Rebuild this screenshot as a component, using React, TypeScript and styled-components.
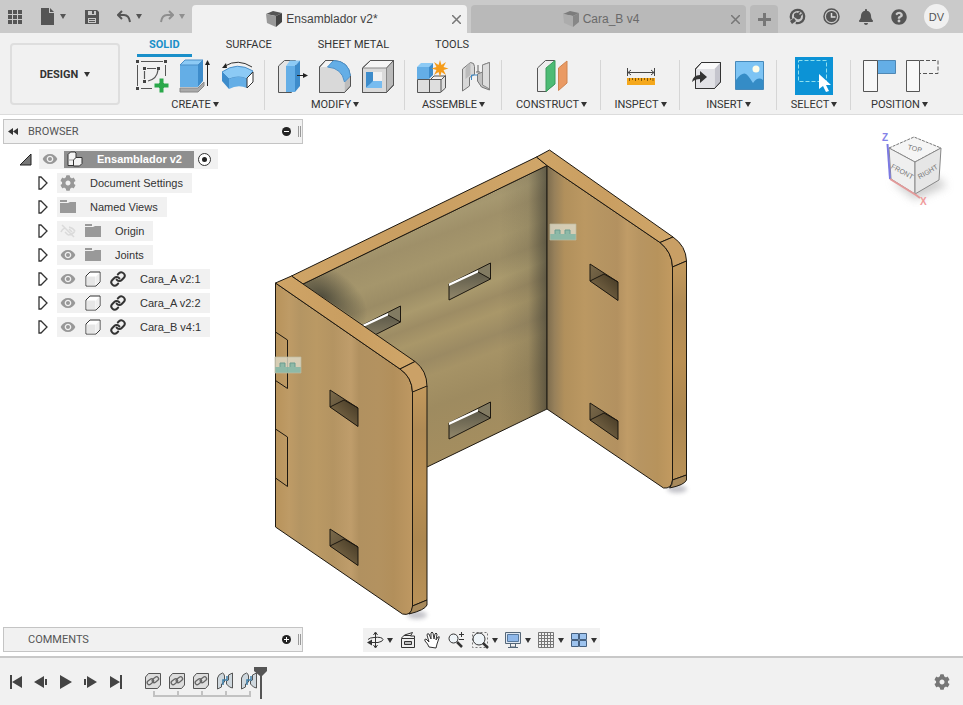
import React from 'react';
import styled, { createGlobalStyle, css } from 'styled-components';
import { Link as ChainIcon } from 'lucide-react';
import { MdVisibility } from 'react-icons/md';
import { FaBell, FaCog, FaQuestionCircle } from 'react-icons/fa';

const GlobalStyle = createGlobalStyle`
  *, *::before, *::after { box-sizing: border-box; }
  body { margin: 0; background: #fff; color: #333; font-family: "Liberation Sans", Arial, sans-serif; font-size: 11px; }
  button { font: inherit; color: inherit; background: none; border: 0; padding: 0; margin: 0; }
  svg { display: block; flex: none; }
  ul { list-style: none; margin: 0; padding: 0; }
`;

const Page = styled.div`
  min-height: 100vh;
  display: flex;
  flex-direction: column;
`;

/* ---------- title bar ---------- */

const TitleBar = styled.header`
  display: flex;
  align-items: flex-end;
  height: 33px;
  background: #cacaca;
  color: #5a5a5a;
`;

const QuickTools = styled.div`
  flex: none;
  width: 192px;
  height: 33px;
  padding: 0 7px 0 7px;
  display: flex;
  align-items: center;
  justify-content: space-between;
`;

const BarButton = styled.button<{ $faded?: boolean }>`
  display: flex;
  align-items: center;
  gap: 5px;
  color: ${p => (p.$faded ? '#8f8f8f' : '#555')};
`;

const FileTab = styled.div<{ $active?: boolean }>`
  flex: 0 1 275px;
  height: 28px;
  margin-right: 4px;
  padding: 0 6px 0 0;
  display: flex;
  align-items: center;
  border-radius: 4px 4px 0 0;
  background: ${p => (p.$active ? '#f1f1f1' : '#b9b9b9')};
  color: ${p => (p.$active ? '#444' : '#6a6a6a')};
  font-size: 12px;
`;

const FileName = styled.button`
  flex: 1;
  display: flex;
  align-items: center;
  justify-content: center;
  gap: 4px;
  white-space: nowrap;
`;

const IconButton = styled.button`
  display: flex;
  align-items: center;
  justify-content: center;
`;

const AddTab = styled(IconButton)`
  flex: none;
  width: 28px;
  height: 28px;
  border-radius: 4px 4px 0 0;
  background: #bababa;
`;

const AccountTools = styled.div`
  flex: 1;
  height: 33px;
  padding: 0 14px 0 11px;
  display: flex;
  align-items: center;
  justify-content: space-between;
  color: #555;
`;

const Avatar = styled.button`
  width: 25px;
  height: 25px;
  border-radius: 50%;
  background: #f0f0f0;
  font-size: 11px;
`;

/* ---------- ribbon ---------- */

const Ribbon = styled.section`
  display: flex;
  height: 82px;
  background: #f1f1f1;
  border-bottom: 1px solid #dcdcdc;
  font-family: Roboto, "Liberation Sans", sans-serif;
  font-size: 11px;
  color: #333;
`;

const Workspace = styled.button`
  flex: none;
  width: 110px;
  height: 62px;
  margin: 10px 5px 0 10px;
  display: flex;
  align-items: center;
  justify-content: center;
  gap: 6px;
  border: 2px solid #dedede;
  border-radius: 4px;
  font-weight: 700;
`;

const RibbonBody = styled.div`
  flex: 1;
  min-width: 0;
`;

const RibbonTabs = styled.div`
  display: flex;
  gap: 22px;
  padding-left: 12px;
  height: 24px;
`;

const RibbonTab = styled.button<{ $active?: boolean }>`
  height: 24px;
  padding: 1px 12px 0;
  border-bottom: 3px solid transparent;
  ${p => p.$active && css`
    border-bottom-color: #1a8fc9;
    color: #1a8fc9;
    font-weight: 700;
  `}
`;

const Groups = styled.div`
  display: flex;
`;

const GroupBox = styled.div<{ $width?: number }>`
  flex: none;
  min-width: ${p => p.$width ?? 97}px;
  height: 57px;
  padding: 0 8px;
  display: flex;
  flex-direction: column;
  align-items: center;
  background: linear-gradient(#d6d6d6, #d6d6d6) right 3px / 1px 50px no-repeat;
  &:last-child { background: none; }
`;

const GroupIcons = styled.div`
  display: flex;
  gap: 5px;
`;

const GroupLabel = styled.button`
  height: 20px;
  display: flex;
  align-items: center;
  gap: 2px;
  white-space: nowrap;
`;

/* ---------- canvas ---------- */

const Canvas = styled.main`
  flex: 1;
  display: grid;
  grid-template: 1fr / 1fr;
  background: #fff;
  > * { grid-area: 1 / 1; }
`;

const ModelArea = styled.div`
  place-self: center;
`;

const CubeArea = styled.div`
  place-self: start end;
  padding-top: 5px;
`;

const SidePanels = styled.aside`
  width: 303px;
  padding: 4px 0 4px 3px;
  display: flex;
  flex-direction: column;
  justify-content: space-between;
`;

const PanelHead = styled.div`
  height: 25px;
  display: flex;
  align-items: center;
  padding: 0 1px 0 4px;
  border: 1px solid #c4c4c4;
  background: #f1f1f1;
  font-size: 11px;
  font-family: Roboto, "Liberation Sans", sans-serif;
  color: #555;
`;

const PanelTitle = styled.h2`
  flex: 1;
  margin: 0;
  font: inherit;
`;

const PanelCollapse = styled(IconButton)`
  width: 20px;
  justify-content: flex-start;
`;

const Grip = styled.span`
  width: 3px;
  height: 11px;
  margin-left: 7px;
  border: solid #999;
  border-width: 0 1px;
`;

const Tree = styled.ul`
  padding-top: 3px;
`;

const TreeRow = styled.li<{ $root?: boolean }>`
  height: 24px;
  padding-left: ${p => (p.$root ? 16 : 35)}px;
  display: flex;
  align-items: center;
  gap: ${p => (p.$root ? 7 : 9)}px;
`;

const Chip = styled.div<{ $root?: boolean }>`
  height: 20px;
  padding: 0 ${p => (p.$root ? 6 : 9)}px 0 3px;
  display: flex;
  align-items: center;
  gap: ${p => (p.$root ? 3 : 9)}px;
  background: #f1f1f1;
  color: #989898;
`;

const NodeName = styled.button`
  margin-left: 5px;
  color: #333;
  white-space: nowrap;
`;

const RootName = styled.button`
  height: 17px;
  margin-left: 3px;
  padding: 0 12px 0 3px;
  display: flex;
  align-items: center;
  gap: 14px;
  background: #8f8f8f;
  color: #fff;
  font-weight: 700;
  white-space: nowrap;
`;

const NavBar = styled.div`
  place-self: end center;
  height: 24px;
  margin-bottom: 4px;
  padding: 0 3px;
  display: flex;
  align-items: center;
  gap: 6px;
  background: #f1f1f1;
`;

const NavButton = styled.button`
  display: flex;
  align-items: center;
  gap: 3px;
  color: #333;
`;

/* ---------- timeline ---------- */

const Timeline = styled.footer`
  height: 49px;
  padding: 0 13px 0 7px;
  display: flex;
  align-items: center;
  border-top: 2px solid #c8c8c8;
  background: #f1f1f1;
  color: #444;
`;

const Playback = styled.div`
  display: flex;
  gap: 7px;
  margin-right: 16px;
`;

const Features = styled.div`
  flex: 1;
  display: flex;
  align-items: flex-start;
  height: 30px;
`;

const Feature = styled.button`
  width: 24px;
  padding-top: 5px;
  display: flex;
  flex-direction: column;
  align-items: center;
`;

const MarkerButton = styled(IconButton)`
  margin-left: -7px;
`;

const Caret = () => (
  <svg width="6" height="5" viewBox="0 0 6 5" fill="currentColor"><path d="M0 0h6L3 5z" /></svg>
);

/* ---------- small icons ---------- */

const GridIcon = () => (
  <svg width="16" height="16" viewBox="0 0 16 16" fill="currentColor">
    {[1, 6, 11].map(y => [1, 6, 11].map(x => <rect key={`${x}${y}`} x={x} y={y} width="4" height="4" />))}
  </svg>
);

const FileIcon = () => (
  <svg width="14" height="17" viewBox="0 0 14 17" fill="currentColor"><path d="M0 0h8v5h5v12H0z M9 0l4 4H9z" /></svg>
);

const SaveIcon = () => (
  <svg width="14" height="14" viewBox="0 0 14 14"><path fill="currentColor" fillRule="evenodd" d="M0 0h12l2 2v12H0zM3 1v4h8V1zM3 8v5h8V8z" /><path fill="currentColor" d="M7 1h2v3H7zM4 9h6v1H4zM4 11h6v1H4z" /></svg>
);

const UndoIcon = ({ redo }: { redo?: boolean }) => (
  <svg width="14" height="13" viewBox="0 0 14 13" fill="none" stroke="currentColor" strokeWidth="2">
    {redo ? <path d="M9 1l4 4-4 4M13 5H7Q2 5 1 12" /> : <path d="M5 1L1 5l4 4M1 5h6q5 0 6 7" />}
  </svg>
);

const DocCube = ({ faded }: { faded?: boolean }) => (
  <svg width="16" height="16" viewBox="0 0 16 16" opacity={faded ? 0.6 : 1}>
    <path d="M0 3L7 0l9 2-6 3z" fill="#555" />
    <path d="M0 3l10 2v11L1 12z" fill={faded ? '#a5a5a5' : '#999'} />
    <path d="M10 5l6-3v9l-6 5z" fill={faded ? '#666' : '#444'} />
  </svg>
);

const CloseIcon = () => (
  <svg width="9" height="9" viewBox="0 0 9 9" stroke="#777" strokeWidth="1.500"><path d="M0 0l9 9M9 0L0 9" /></svg>
);

const PlusIcon = () => (
  <svg width="14" height="14" viewBox="0 0 14 14" fill="#777"><path d="M6 1h3v5h5v3H9v5H6V9H1V6h5z" /></svg>
);

const ExtensionsIcon = () => (
  <svg width="17" height="17" viewBox="0 0 17 17">
    <circle cx="8.500" cy="8.500" r="6.700" fill="none" stroke="currentColor" strokeWidth="2.300" strokeDasharray="36 6" transform="rotate(155 8.500 8.500)" />
    <path d="M1 13l4-3 2 3-4 3z" fill="currentColor" />
    <path d="M5 6q3-3 5 0l2 2q0 4-4 3L5 9z" fill="currentColor" />
    <path d="M8 7l3-3M10 9l3-3" stroke="currentColor" strokeWidth="1.500" />
  </svg>
);

const ClockIcon = () => (
  <svg width="17" height="17" viewBox="0 0 17 17">
    <circle cx="8.500" cy="8.500" r="7.500" fill="none" stroke="currentColor" strokeWidth="1.500" />
    <circle cx="8.500" cy="8.500" r="5.500" fill="currentColor" />
    <path d="M8.500 5v4h4" fill="none" stroke="#ddd" strokeWidth="1.500" />
  </svg>
);

/* ---------- ribbon icons ---------- */

const Ico = ({ children }: { children: React.ReactNode }) => (
  <svg width="38" height="38" viewBox="0 0 38 38" fill="none" stroke="#555" strokeWidth="1">{children}</svg>
);

const SketchIcon = () => (
  <Ico>
    <path d="M8 4.500h22M4.500 8v21M8 31.500h11M32.500 8v11" />
    <path d="M14 11.500h9M11.500 14v8M25 13q-1 9-10 11" strokeWidth="1.200" />
    <path d="M3 3h3v3H3zM31 3h3v3h-3zM3 30h3v3H3zM10 10h3v3h-3zM24 10h3v3h-3zM10 23h3v3h-3z" fill="#444" stroke="none" />
    <path d="M26 21h5v5h5v5h-5v5h-5v-5h-5v-5h5z" fill="#2aa84a" stroke="#f1f1f1" />
  </Ico>
);

const ExtrudeIcon = () => (
  <Ico>
    <path d="M4 31h18l6-6v4l-6 6H4z" fill="#aaa" stroke="#888" />
    <path d="M4 8h18v22H4z" fill="#64aee6" stroke="none" />
    <path d="M4 8l5-5h18l-5 5z" fill="#8ccaf5" stroke="#4b8fc8" />
    <path d="M22 8l5-5v21l-5 6z" fill="#3d8ccb" stroke="none" />
    <path d="M31.500 29V7" stroke="#222" /><path d="M29 8l2.500-5L34 8z" fill="#222" stroke="none" />
  </Ico>
);

const RevolveIcon = () => (
  <Ico>
    <path d="M3 15Q18 4 34 14l-6 8q-8-4-18 0z" fill="#8ccaf5" stroke="#4b8fc8" />
    <path d="M3 15l7 7v10l-7-8z" fill="#3d8ccb" stroke="none" />
    <path d="M10 22q10-4 18 0v9q-9-4-18 1z" fill="#64aee6" stroke="none" />
    <path d="M28 21l6-6v10l-6 6z" fill="#fff" stroke="#333" />
    <path d="M6 9Q19 1 33 10" stroke="#333" /><path d="M3 11l4-5 1 5z" fill="#222" stroke="none" />
  </Ico>
);

const PressPullIcon = () => (
  <Ico>
    <path d="M5.500 9l6-5.500h11V30l-4 5.500h-13z" fill="#e4e4e4" />
    <path d="M13 9h9v26h-9z" fill="#64aee6" stroke="none" />
    <path d="M13 9l4-5.500h10L22 9z" fill="#8ccaf5" stroke="none" />
    <path d="M22 9l5-5.500V29l-5 6z" fill="#3d8ccb" stroke="none" />
    <path d="M24 18.500h7" stroke="#222" /><path d="M30 16l5 2.500-5 2.500z" fill="#222" stroke="none" />
  </Ico>
);

const FilletIcon = () => (
  <Ico>
    <path d="M3.500 10l6-6.500h8Q33 4 34.500 20v9l-6 6.500h-25z" fill="#f4f4f4" />
    <path d="M3.500 10h8q15 1 17 15v10.500h-25z" fill="#d9d9d9" stroke="none" />
    <path d="M28.500 25l6-6v10l-6 6.500z" fill="#bdbdbd" stroke="none" />
    <path d="M11.500 10l6-6.500Q33 4 34.500 19l-6 6Q26 11 11.500 10z" fill="#64aee6" stroke="#4b8fc8" />
    <path d="M3.500 10l6-6.500h8M34.500 19v10l-6 6.500h-25V10" />
  </Ico>
);

const ShellIcon = () => (
  <Ico>
    <path d="M3.500 11l8-7.500h23V28l-7 7.500h-24z" fill="#f6f6f6" />
    <path d="M27.500 11l7-7.500V28l-7 7.500z" fill="#bbb" />
    <path d="M3.500 11h24v24.500h-24z" fill="#dadada" stroke="#888" />
    <path d="M7 15h16v16H7z" fill="#f1f1f1" stroke="none" />
    <path d="M7 15h7v10l-7 6z" fill="#3d8ccb" stroke="none" /><path d="M14 24h9v7H7z" fill="#77bcf0" stroke="none" />
    <path d="M3.500 11l8-7.500h23V28l-7 7.500h-24z" />
  </Ico>
);

const NewComponentIcon = () => (
  <Ico>
    <path d="M4.500 22.500h24l4-4V31l-5 4.500h-23z" fill="#dedede" />
    <path d="M16.500 23v12.500M28 22.500V35M18 22l3-3h11" />
    <path d="M4 10h12v12H4z" fill="#64aee6" stroke="none" /><path d="M4 10l4-4h12l-4 4z" fill="#8ccaf5" stroke="none" /><path d="M16 10l4-4v12l-4 4z" fill="#3d8ccb" stroke="none" />
    <path d="M27 3l1.500 5L33 5l-2.500 5 5 1.500-5 1.500 2.500 5-4.500-3-1.500 5-1.500-5-4.500 3 2.500-5-5-1.500 5-1.500L21 5l4.500 3z" fill="#f59c1a" stroke="none" />
  </Ico>
);

const JointIcon = () => (
  <Ico>
    <path d="M6.500 12l8-6.500q4 0 4 4v8l-5 3V29l-7 5z" fill="#d8d8d8" stroke="#777" />
    <path d="M9.500 12q1-4 5-6v12l-5 4z" fill="#bbb" stroke="none" />
    <path d="M21.500 17l5-2V8l7-2.500V33l-8-3-4-6z" fill="#c2c2c2" stroke="#777" />
    <path d="M26.500 8v20l7 4V5.500z" fill="#ddd" stroke="#888" />
    <path d="M15.500 23v-5h6" stroke="#3d8ccb" /><path d="M20 15h4M22 8v7" stroke="#666" />
  </Ico>
);

const ConstructIcon = () => (
  <Ico>
    <path d="M4.500 11l8-7.500h9V27L13 34.500H4.500z" fill="#eee" />
    <path d="M13 11l9-7.500V27l-9 7.500z" fill="#4dbb74" stroke="#3b9c5d" />
    <path d="M25.500 11L34 4v22l-8.500 7.500z" fill="#ea9a63" stroke="#cf8450" />
  </Ico>
);

const MeasureIcon = () => (
  <Ico>
    <path d="M5.500 11v8M32.500 11v8M6 15.500h26M9 13l-3 2.500L9 18M29 13l3 2.500-3 2.500" stroke="#444" />
    <path d="M5 21h28v7H5z" fill="#f5a81c" stroke="none" />
    <path d="M7.500 21v3M10.500 21v2M13.500 21v3M16.500 21v2M19.500 21v3M22.500 21v2M25.500 21v3M28.500 21v2M31 21v3" stroke="#855a0a" />
  </Ico>
);

const InsertIcon = () => (
  <Ico>
    <path d="M7.500 12l6-6.500h19V25l-6 6.500h-19z" fill="#fafafa" stroke="#333" />
    <path d="M26.500 12l6-6.500V25l-6 6.500z" fill="#c5c5cd" stroke="none" /><path d="M8 12h18v19H8z" fill="#e2e2e6" stroke="none" />
    <path d="M7.500 12l6-6.500h19V25l-6 6.500h-19z" stroke="#333" />
    <path d="M4 25q1-7 8-7v-4l7 6-7 6v-4q-5 0-8 3z" fill="#333" stroke="none" />
  </Ico>
);

const ImageIcon = () => (
  <Ico>
    <path d="M4.500 4.500h28v28h-28z" fill="#7dc4f4" stroke="#4689ba" />
    <path d="M5 23q6-8 10-6 2 1 7 9 5-7 10-3v9H5z" fill="#358cc6" stroke="none" />
    <circle cx="25" cy="12" r="3.500" fill="#fffde8" stroke="none" />
  </Ico>
);

const SelectIcon = () => (
  <Ico>
    <path d="M0 0h38v38H0z" fill="#0c93d6" stroke="none" />
    <path d="M3.500 3.500h28v21h-28z" stroke="#8fe0ee" strokeDasharray="4 2" />
    <path d="M24 17v15l4-3 3 6 3-1-3-6h5z" fill="#fff" stroke="none" />
  </Ico>
);

const CaptureIcon = () => (
  <Ico>
    <path d="M18.500 3.500h18v13h-18z" fill="#64aee6" stroke="#4f88b5" />
    <path d="M4.500 3.500h14v31h-14z" fill="#f8f8f8" />
  </Ico>
);

const RevertIcon = () => (
  <Ico>
    <path d="M18 3.500h18v13H18" strokeDasharray="4 2" />
    <path d="M4.500 3.500h13v31h-13z" fill="#f8f8f8" />
  </Ico>
);

type GroupDef = { label: string; width?: number; icons: [string, React.FC][] };

const groups: GroupDef[] = [
  { label: 'CREATE', icons: [['Create Sketch', SketchIcon], ['Extrude', ExtrudeIcon], ['Revolve', RevolveIcon]] },
  { label: 'MODIFY', icons: [['Press Pull', PressPullIcon], ['Fillet', FilletIcon], ['Shell', ShellIcon]] },
  { label: 'ASSEMBLE', icons: [['New Component', NewComponentIcon], ['Joint', JointIcon]] },
  { label: 'CONSTRUCT', width: 99, icons: [['Offset Plane', ConstructIcon]] },
  { label: 'INSPECT', width: 79, icons: [['Measure', MeasureIcon]] },
  { label: 'INSERT', icons: [['Insert Derive', InsertIcon], ['Canvas', ImageIcon]] },
  { label: 'SELECT', width: 74, icons: [['Select', SelectIcon]] },
  { label: 'POSITION', icons: [['Capture Position', CaptureIcon], ['Revert', RevertIcon]] },
];

/* ---------- tree icons ---------- */

const ArrowIcon = () => (
  <svg width="10" height="14" viewBox="0 0 10 14" fill="#fff" stroke="#333" strokeWidth="1.300"><path d="M1 1h2l6 6-6 6H1z" /></svg>
);

const OpenArrowIcon = () => (
  <svg width="13" height="13" viewBox="0 0 13 13"><path d="M12 1v11H1z" fill="#777" stroke="#222" /></svg>
);

const FolderIcon = () => (
  <svg width="16" height="14" viewBox="0 0 16 14"><path d="M0 3h8l2-1h6v11H0zM0 0h7v2H0z" fill="#999" /></svg>
);

const HiddenIcon = () => (
  <svg width="16" height="14" viewBox="0 0 16 14" fill="none" stroke="#dadada" strokeWidth="1.500">
    <path d="M1 8q1-3 4-4M15 7q-3 4-7 4M2 1l12 12M5 8l3 3M9 3q4 1 6 4M9 5l3 3" />
  </svg>
);

const BodyIcon = () => (
  <svg width="16" height="16" viewBox="0 0 16 16"><path d="M1 5l4-4h10v10l-4 4H1z" fill="#fff" stroke="#333" strokeLinejoin="round" /><path d="M1.500 5.500h9v9h-9z" fill="#e6e6e6" /><path d="M11 5.500l3.500-4v9l-3.500 4z" fill="#eee" /></svg>
);

const AssemblyIcon = () => (
  <svg width="16" height="16" viewBox="0 0 16 16" fill="#f3f3f3" stroke="#333" strokeLinejoin="round">
    <path d="M1 3.500L3.500 1H8l1 1v12.500H1z" /><path d="M6.500 9L9 6.500h6v6l-2.500 2.500h-6z" /><path d="M1 9h5" stroke="#999" />
  </svg>
);

const ActiveIcon = () => (
  <svg width="15" height="15" viewBox="0 0 15 15"><circle cx="7.500" cy="7.500" r="6" fill="#fff" stroke="#333" /><circle cx="7.500" cy="7.500" r="2.500" fill="#222" /></svg>
);

const RoundIcon = ({ plus }: { plus?: boolean }) => (
  <svg width="9" height="9" viewBox="0 0 9 9"><circle cx="4.500" cy="4.500" r="4.500" fill="#222" /><path d={plus ? 'M2 4.500h5M4.500 2v5' : 'M2 4.500h5'} stroke="#fff" /></svg>
);

type NodeIcon = 'eye' | 'hidden' | 'gear' | 'folder' | 'body' | 'link';

const nodeIcon: Record<NodeIcon, React.ReactNode> = {
  eye: <MdVisibility size={16} />,
  hidden: <HiddenIcon />,
  gear: <FaCog size={16} />,
  folder: <FolderIcon />,
  body: <BodyIcon />,
  link: <ChainIcon size={16} color="#333" strokeWidth={3} />,
};

const nodes: { name: string; icons: NodeIcon[] }[] = [
  { name: 'Document Settings', icons: ['gear'] },
  { name: 'Named Views', icons: ['folder'] },
  { name: 'Origin', icons: ['hidden', 'folder'] },
  { name: 'Joints', icons: ['eye', 'folder'] },
  { name: 'Cara_A v2:1', icons: ['eye', 'body', 'link'] },
  { name: 'Cara_A v2:2', icons: ['eye', 'body', 'link'] },
  { name: 'Cara_B v4:1', icons: ['eye', 'body', 'link'] },
];

/* ---------- 3D model ---------- */

const SideSlot = ({ x, y }: { x: number; y: number }) => (
  <g transform={`translate(${x} ${y})`} strokeLinejoin="round">
    <path d="M0 0L28 18V36.500L0 17z" fill="url(#slotDark)" />
    <path d="M0 17L14 10l14 9v17.500z" fill="url(#slotFloor)" />
    <path d="M0 0L28 18V36.500L0 17zM0 17L14 10l14 8" fill="none" stroke="#1d1810" />
  </g>
);

const BackSlot = ({ x, y }: { x: number; y: number }) => (
  <g transform={`translate(${x} ${y})`}>
    <path d="M0 21L41.500 0V16L0 37z" fill="url(#backSlot)" />
    <path d="M29 6L41.500 0V16L29 9z" fill="#827b62" />
    <path d="M0 21L41.500 0V16L0 37zM29 9l12.500 7" fill="none" stroke="#1d1810" />
    <path d="M0 20.500L29 7V9.500L0 23z" fill="#fff" />
  </g>
);

const JointBadge = ({ x, y }: { x: number; y: number }) => (
  <g transform={`translate(${x} ${y})`}>
    <path d="M0 0h26v16H0z" fill="#dfdccb" opacity=".8" />
    <path d="M0 10h5V6h5v4h5V6h5v4h6v6H0z" fill="#7cb4a4" opacity=".8" />
    <path d="M5 10V6h5v4M15 10V6h5v4" fill="none" stroke="#6a9c90" />
    <path d="M0 0h26v16H0z" fill="none" stroke="#bdbba0" opacity=".7" />
  </g>
);

const Model = () => (
  <svg width="422" height="480" viewBox="271 146 422 480" role="img" aria-label="Ensamblador v2">
    <defs>
      <linearGradient id="face">
        <stop offset="0" stopColor="#b8935b" /><stop offset=".1" stopColor="#be9b66" /><stop offset=".18" stopColor="#b49563" />
        <stop offset=".3" stopColor="#ba9964" /><stop offset=".42" stopColor="#b49462" /><stop offset=".55" stopColor="#bf9d6b" />
        <stop offset=".61" stopColor="#b19160" /><stop offset=".75" stopColor="#b39260" /><stop offset=".86" stopColor="#b28f5b" /><stop offset="1" stopColor="#be9862" />
      </linearGradient>
      <linearGradient id="rightFace">
        <stop offset="0" stopColor="#7c6c4e" /><stop offset=".06" stopColor="#97805a" /><stop offset=".14" stopColor="#b1905c" /><stop offset=".3" stopColor="#bb9862" />
        <stop offset=".42" stopColor="#b69562" /><stop offset=".56" stopColor="#b39160" /><stop offset=".64" stopColor="#c09c67" />
        <stop offset=".74" stopColor="#b79562" /><stop offset=".88" stopColor="#b7935c" /><stop offset="1" stopColor="#c29a60" />
      </linearGradient>
      <linearGradient id="back" gradientUnits="userSpaceOnUse" x1="390" y1="210" x2="480" y2="450">
        <stop offset="0" stopColor="#9a8d6a" /><stop offset=".1" stopColor="#a69870" /><stop offset=".16" stopColor="#9f9069" /><stop offset=".25" stopColor="#a5966c" />
        <stop offset=".33" stopColor="#9b8c65" /><stop offset=".4" stopColor="#aa9a6d" /><stop offset=".46" stopColor="#9d8c64" /><stop offset=".52" stopColor="#a99769" />
        <stop offset=".6" stopColor="#9b8a63" /><stop offset=".66" stopColor="#a69366" /><stop offset=".78" stopColor="#9e8b60" /><stop offset="1" stopColor="#a58e5f" />
      </linearGradient>
      <linearGradient id="corner" gradientUnits="userSpaceOnUse" x1="500" y1="0" x2="547" y2="0">
        <stop offset="0" stopColor="#3b3a30" stopOpacity="0" /><stop offset=".6" stopColor="#3b3a30" stopOpacity=".12" /><stop offset="1" stopColor="#33332c" stopOpacity=".6" />
      </linearGradient>
      <radialGradient id="leftCorner" gradientUnits="userSpaceOnUse" cx="0" cy="0" r="50" gradientTransform="translate(322 297) rotate(32) scale(1 .6)">
        <stop offset="0" stopColor="#34352d" stopOpacity=".75" /><stop offset="1" stopColor="#34352d" stopOpacity="0" />
      </radialGradient>
      <linearGradient id="edge" x1="0" y1="0" x2="0" y2="1">
        <stop offset="0" stopColor="#c49a5d" /><stop offset=".2" stopColor="#b08b55" /><stop offset=".45" stopColor="#b98f53" /><stop offset=".7" stopColor="#ac8750" /><stop offset="1" stopColor="#b99258" />
      </linearGradient>
      <linearGradient id="top"><stop offset="0" stopColor="#cfa466" /><stop offset=".5" stopColor="#c99e61" /><stop offset="1" stopColor="#d0a669" /></linearGradient>
      <linearGradient id="slotDark" x2="1" y2="1"><stop offset="0" stopColor="#7b6a4a" /><stop offset=".6" stopColor="#5c4e37" /><stop offset="1" stopColor="#3d3220" /></linearGradient>
      <linearGradient id="slotFloor" x1="0" y1="1" x2="1" y2="0"><stop offset="0" stopColor="#8c7753" /><stop offset="1" stopColor="#413622" /></linearGradient>
      <linearGradient id="backSlot" x2="0" y2="1"><stop offset="0" stopColor="#4b4a3e" /><stop offset="1" stopColor="#93886b" /></linearGradient>
      <filter id="soft" x="-50%" y="-100%" width="200%" height="300%"><feGaussianBlur stdDeviation="2" /></filter>
    </defs>

    <g fill="#a5a5ad" opacity=".65" filter="url(#soft)"><ellipse cx="417" cy="615" rx="10" ry="4" /><ellipse cx="677" cy="489" rx="10" ry="4" /></g>

    <g stroke="#1d1810" strokeLinejoin="round">
      <path d="M303 284L547 165.500V409L427 467l-60-80z" fill="url(#back)" />
      <path d="M303 284L547 165.500V409L427 467l-60-80z" fill="url(#corner)" stroke="none" />
      <path d="M303 284L420 227V362z" fill="url(#leftCorner)" stroke="none" />
      <path d="M291.500 276L536.500 157l10.500 8.500L303 284z" fill="url(#top)" />
    </g>
    <BackSlot x={449} y={263} />
    <BackSlot x={359} y={306} />
    <BackSlot x={449} y={402} />

    <g stroke="#1d1810" strokeLinejoin="round">
      <path d="M547 165.500L660 242.500Q672 252 672.500 267V480q-1 9-9 8L547 409z" fill="url(#rightFace)" />
      <path d="M536.500 157L549.500 150 673 237l-13 5.500L547 165.500z" fill="url(#top)" />
      <path d="M660 242.500L673 237q13 9 13.500 24l-14 6Q672 252 660 242.500z" fill="#c99f65" />
      <path d="M672.500 267l14-6V475l-14 5z" fill="url(#edge)" />
      <path d="M672.500 480l14-5v5q-2 5-17 8 3-3 3-8z" fill="#a88a5c" />
    </g>
    <SideSlot x={590} y={264} />
    <SideSlot x={590} y={403} />

    <g stroke="#1d1810" strokeLinejoin="round">
      <path d="M275.500 283L400 369q12 8 12.500 23V608q-2 8-10 6L275.500 527z" fill="url(#face)" />
      <path d="M275.500 283L291.500 276 415 361.500 400 369z" fill="url(#top)" />
      <path d="M400 369L415 361.500q12 9 12 25l-14.500 6Q412 377 400 369z" fill="#cba167" />
      <path d="M412.500 392l14.500-6V600l-14.500 6z" fill="url(#edge)" />
      <path d="M412.500 606l14.500-6v5q-2 5-18 9 3-3 3.500-8z" fill="#a88a5c" />
      <path d="M275.500 332l12 8v48.500l-12-8M275.500 429l12 8v49.500l-12-8.500" fill="none" />
    </g>
    <SideSlot x={330} y={390} />
    <SideSlot x={330} y={529} />
    <JointBadge x={275} y={357} />
    <JointBadge x={550} y={224} />
  </svg>
);

const ViewCube = () => (
  <svg width="93" height="95" viewBox="0 0 93 95" fontFamily='"Liberation Sans", Arial, sans-serif'>
    <defs><filter id="cubeSoft" x="-30%" y="-30%" width="160%" height="160%"><feGaussianBlur stdDeviation="4" /></filter></defs>
    <path d="M22 62l23 18 32-14-8-8z" fill="#bbb" opacity=".7" filter="url(#cubeSoft)" />
    <path d="M19 28L44 17l27 11-26 14z" fill="#f5f5f5" stroke="#777" strokeDasharray="3 1" />
    <path d="M19 28l26 14v32L21 59z" fill="#efefef" stroke="#888" />
    <path d="M71 28L45 42v32l24-14z" fill="#e6e6e6" stroke="#888" />
    <path d="M17.500 24L20 59" stroke="#7b79e2" strokeWidth="2" />
    <path d="M20 59l26 16 4 3" fill="none" stroke="#e39a9a" strokeWidth="2" />
    <g fill="#777" fontSize="7" textAnchor="middle">
      <text x="45" y="31" transform="rotate(14 45 28)">TOP</text>
      <text x="32" y="54" transform="rotate(28 32 52)">FRONT</text>
      <text x="58" y="54" transform="rotate(-30 58 52)">RIGHT</text>
    </g>
    <text x="12" y="21" fontSize="10" fontWeight="700" fill="#8583e8">Z</text>
    <text x="50" y="85" fontSize="10" fontWeight="700" fill="#f09a9a">X</text>
  </svg>
);

/* ---------- navigation icons ---------- */

const Nav = ({ children }: { children: React.ReactNode }) => (
  <svg width="18" height="18" viewBox="0 0 18 18" fill="none" stroke="#333">{children}</svg>
);

const navTools: { name: string; menu?: boolean; icon: React.ReactNode }[] = [
  { name: 'Orbit', menu: true, icon: <Nav><path d="M9.500 2v14M7.500 4l2-3 2 3M7.500 14l2 3 2-3" /><path d="M4 11.500h8q5-1 5-3-1-3-9-2-4 0-6 2" /><path d="M6 8.500v6l-5-3z" fill="#333" stroke="none" /></Nav> },
  { name: 'Look At', icon: <Nav><path d="M2.500 7.500h13v9h-13z" fill="#eee" /><path d="M5.500 10.500h7v3h-7z" fill="#bbb" /><path d="M2.500 7l3-3 8-2.500-2 3.500h4v2.500M5 4.500h7" /></Nav> },
  { name: 'Pan', icon: <Nav><path d="M6 16q-1-3-4-6-1-2 1-2l3 3-2-7q0-2 2-1l2 5V2q1-2 2 0l1 6 1-5q1-2 2 0l-1 6 2-3q2-1 1 1l-2 6-1 4z" fill="#fff" /></Nav> },
  { name: 'Zoom', icon: <Nav><circle cx="6.500" cy="7.500" r="4.500" fill="#eef4f8" /><path d="M10 11l5 5" strokeWidth="2.500" /><path d="M14.500 1v5M12 3.500h5M12 8.500h5" /></Nav> },
  { name: 'Zoom Window', menu: true, icon: <Nav><path d="M1.500 1.500h15v15h-15z" strokeDasharray="2 2" stroke="#777" /><circle cx="8" cy="8" r="6" fill="#eef4f8" /><path d="M12 12l5 5" strokeWidth="2.500" /></Nav> },
  { name: 'Display Settings', menu: true, icon: <Nav><path d="M1.500 1.500h15v11h-15z" fill="#dfe8f2" stroke="#567" /><path d="M3.500 3.500h11v7h-11z" fill="#8fb8ea" stroke="#57789c" /><path d="M6.500 13v3h5v-3M4 16.500h10" stroke="#567" /></Nav> },
  { name: 'Grid and Snaps', menu: true, icon: <Nav><path d="M1.500 1.500h15v15h-15zM4.500 1v16M7.500 1v16M10.500 1v16M13.500 1v16M1 4.500h16M1 7.500h16M1 10.500h16M1 13.500h16" stroke="#777" /></Nav> },
  { name: 'Viewports', menu: true, icon: <Nav><path d="M1.500 2.500h7v6h-7zM9.500 2.500h7v6h-7zM1.500 9.500h7v6h-7zM9.500 9.500h7v6h-7z" fill="#9dc3ee" stroke="#456080" /></Nav> },
];

/* ---------- timeline icons ---------- */

const playback: [string, string][] = [
  ['Go to start', 'M3 2h2v14H3zM15 3v12L5 9z'],
  ['Step back', 'M12 3v12L2 9zM13 6h2v6h-2z'],
  ['Play', 'M3 2l12 7-12 7z'],
  ['Step forward', 'M5 3v12l10-6zM2 6h2v6H2z'],
  ['Go to end', 'M3 3l10 6-10 6zM13 2h2v14h-2z'],
];

const LinkFeature = () => (
  <svg width="18" height="18" viewBox="0 0 18 18"><path d="M1.500 5l3-3.500h12V13l-3 3.500h-12z" fill="#ddd" stroke="#555" /><g fill="none" stroke="#666" strokeWidth="1.300"><rect x="3" y="8" width="7" height="4" rx="2" transform="rotate(-38 6 10)" /><rect x="8" y="6" width="7" height="4" rx="2" transform="rotate(-38 11 8)" /></g></svg>
);

const JointFeature = () => (
  <svg width="18" height="18" viewBox="0 0 18 18" stroke="#555"><path d="M1.500 6q1-4 5-5 2 1 2 3v6l-3 2v3l-4 2z" fill="#cfd8de" /><path d="M10.500 9l2-1V3l4-2v15l-3-1-3-3z" fill="#cfd8de" /><path d="M7 13V8h4V4" fill="none" stroke="#3c7ea8" strokeWidth="1.500" /></svg>
);

const BracketTick = ({ first, last }: { first?: boolean; last?: boolean }) => (
  <svg width="24" height="9" viewBox="0 0 24 9" stroke="#c2c2c2" strokeWidth="2" fill="none"><path d={`M13 1v5M${first ? 12 : 0} 6h${first ? 12 : last ? 14 : 24}`} /></svg>
);

const Marker = () => (
  <svg width="13" height="32" viewBox="0 0 13 32" fill="#555"><path d="M0 0h13v4L8 9v23H6V9L0 4z" /></svg>
);

export default function App() {
  return (
    <Page>
      <GlobalStyle />
      <TitleBar>
        <QuickTools>
          <BarButton aria-label="Data panel"><GridIcon /></BarButton>
          <BarButton aria-label="File"><FileIcon /><Caret /></BarButton>
          <BarButton aria-label="Save"><SaveIcon /></BarButton>
          <BarButton aria-label="Undo"><UndoIcon /><Caret /></BarButton>
          <BarButton $faded aria-label="Redo"><UndoIcon redo /><Caret /></BarButton>
        </QuickTools>
        <FileTab $active>
          <FileName><DocCube />Ensamblador v2*</FileName>
          <IconButton aria-label="Close Ensamblador v2"><CloseIcon /></IconButton>
        </FileTab>
        <FileTab>
          <FileName><DocCube faded />Cara_B v4</FileName>
          <IconButton aria-label="Close Cara_B v4"><CloseIcon /></IconButton>
        </FileTab>
        <AddTab aria-label="New tab"><PlusIcon /></AddTab>
        <AccountTools>
          <IconButton aria-label="Extensions"><ExtensionsIcon /></IconButton>
          <IconButton aria-label="Job status"><ClockIcon /></IconButton>
          <IconButton aria-label="Notifications"><FaBell size={16} /></IconButton>
          <IconButton aria-label="Help"><FaQuestionCircle size={16} /></IconButton>
          <Avatar>DV</Avatar>
        </AccountTools>
      </TitleBar>

      <Ribbon>
        <Workspace>DESIGN <Caret /></Workspace>
        <RibbonBody>
          <RibbonTabs role="tablist">
            {['SOLID', 'SURFACE', 'SHEET METAL', 'TOOLS'].map((t, i) => (
              <RibbonTab key={t} role="tab" aria-selected={i === 0} $active={i === 0}>{t}</RibbonTab>
            ))}
          </RibbonTabs>
          <Groups>
            {groups.map(g => (
              <GroupBox key={g.label} $width={g.width}>
                <GroupIcons>
                  {g.icons.map(([name, Icon]) => <IconButton key={name} aria-label={name}><Icon /></IconButton>)}
                </GroupIcons>
                <GroupLabel>{g.label} <Caret /></GroupLabel>
              </GroupBox>
            ))}
          </Groups>
        </RibbonBody>
      </Ribbon>

      <Canvas>
        <ModelArea><Model /></ModelArea>
        <CubeArea><ViewCube /></CubeArea>
        <SidePanels>
          <div>
            <PanelHead>
              <PanelCollapse aria-label="Collapse browser">
                <svg width="11" height="7" viewBox="0 0 11 7" fill="#333"><path d="M5 0v7L0 3.500zM10 0v7L5 3.500z" /></svg>
              </PanelCollapse>
              <PanelTitle>BROWSER</PanelTitle>
              <IconButton aria-label="Hide browser"><RoundIcon /></IconButton>
              <Grip />
            </PanelHead>
            <Tree>
              <TreeRow $root>
                <IconButton aria-label="Collapse Ensamblador v2"><OpenArrowIcon /></IconButton>
                <Chip $root>
                  {nodeIcon.eye}
                  <RootName><AssemblyIcon />Ensamblador v2</RootName>
                  <ActiveIcon />
                </Chip>
              </TreeRow>
              {nodes.map(n => (
                <TreeRow key={n.name}>
                  <IconButton aria-label={`Expand ${n.name}`}><ArrowIcon /></IconButton>
                  <Chip>
                    {n.icons.map(k => <React.Fragment key={k}>{nodeIcon[k]}</React.Fragment>)}
                    <NodeName>{n.name}</NodeName>
                  </Chip>
                </TreeRow>
              ))}
            </Tree>
          </div>
          <PanelHead>
            <PanelCollapse as="span" />
            <PanelTitle>COMMENTS</PanelTitle>
            <IconButton aria-label="Add comment"><RoundIcon plus /></IconButton>
            <Grip />
          </PanelHead>
        </SidePanels>
        <NavBar>
          {navTools.map(t => (
            <NavButton key={t.name} aria-label={t.name}>{t.icon}{t.menu && <Caret />}</NavButton>
          ))}
        </NavBar>
      </Canvas>

      <Timeline>
        <Playback>
          {playback.map(([name, d]) => (
            <IconButton key={name} aria-label={name}>
              <svg width="18" height="18" viewBox="0 0 18 18" fill="currentColor"><path d={d} /></svg>
            </IconButton>
          ))}
        </Playback>
        <Features>
          {[0, 1, 2, 3, 4].map(i => (
            <Feature key={i} aria-label={`Feature ${i + 1}`}>
              {i < 3 ? <LinkFeature /> : <JointFeature />}
              <BracketTick first={i === 0} last={i === 4} />
            </Feature>
          ))}
          <MarkerButton aria-label="Timeline marker"><Marker /></MarkerButton>
        </Features>
        <IconButton aria-label="Timeline settings"><FaCog size={16} color="#777" /></IconButton>
      </Timeline>
    </Page>
  );
}
